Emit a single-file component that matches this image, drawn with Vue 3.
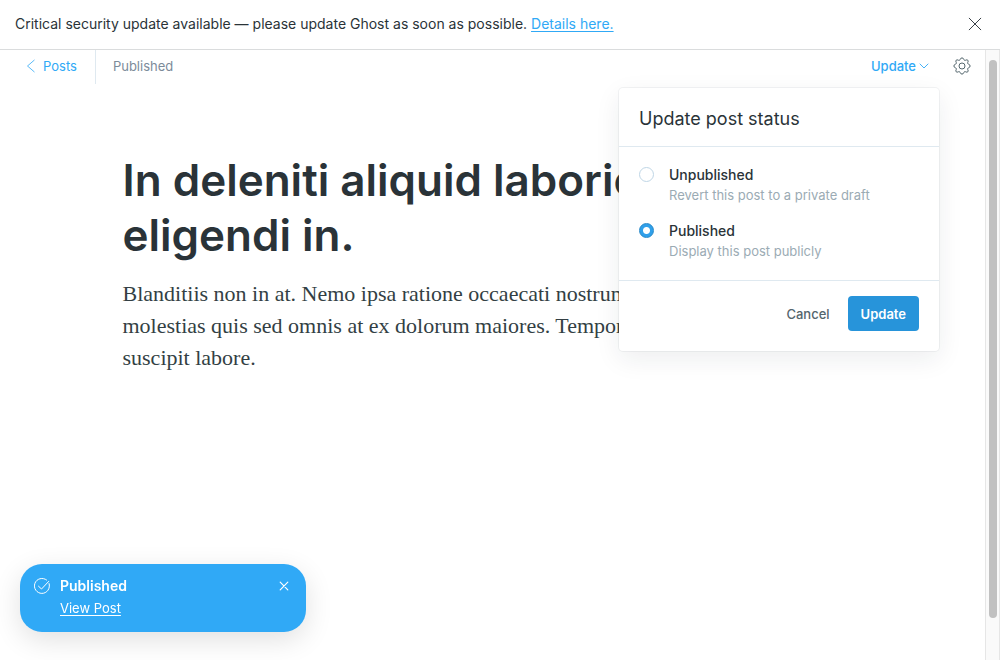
<script setup>
import { ref } from 'vue'

const status = ref('published')
const options = [
  { value: 'draft', label: 'Unpublished', hint: 'Revert this post to a private draft' },
  { value: 'published', label: 'Published', hint: 'Display this post publicly' },
]
</script>

<template>
  <div class="app">
    <aside class="alert">
      <p>Critical security update available — please update Ghost as soon as possible. <a href="#">Details here.</a></p>
      <button class="icon-button" type="button" aria-label="Close alert">
        <svg width="14" height="14" viewBox="0 0 14 14" fill="none" stroke="#394047" stroke-width="1" stroke-linecap="round"><path d="M1.2 1.2l11.6 11.6M12.8 1.2L1.2 12.8" /></svg>
      </button>
    </aside>

    <div class="workspace">
      <main class="editor">
        <header class="toolbar">
          <a class="back" href="#">
            <svg width="10" height="14" viewBox="0 0 10 14" fill="none" stroke="#30a9f6" stroke-width="0.8" stroke-linecap="round" stroke-linejoin="round"><path d="M8.2 1.2L1.5 7l6.7 5.8" /></svg>
            <span>Posts</span>
          </a>
          <span class="state">Published</span>
          <div class="menu">
            <button class="update-trigger" type="button" aria-expanded="true">
              <span>Update</span>
              <svg width="10" height="6" viewBox="0 0 10 6" fill="none" stroke="#30a9f6" stroke-width="0.9" stroke-linecap="round" stroke-linejoin="round"><path d="M1 1l4 4 4-4" /></svg>
            </button>
            <section class="popover" aria-label="Update post status">
              <h2>Update post status</h2>
              <div class="options">
                <label v-for="o in options" :key="o.value" class="option">
                  <input v-model="status" type="radio" name="status" :value="o.value" />
                  <span class="copy"><strong>{{ o.label }}</strong><small>{{ o.hint }}</small></span>
                </label>
              </div>
              <footer>
                <button class="cancel" type="button">Cancel</button>
                <button class="primary" type="button">Update</button>
              </footer>
            </section>
          </div>
          <button class="icon-button" type="button" aria-label="Settings">
            <svg width="18" height="18" viewBox="0 0 18 18" fill="none" stroke="#54666d" stroke-width="1" stroke-linejoin="round">
              <circle cx="9" cy="9" r="3" />
              <path d="M7.3 2.2C7.6 .5 10.4 .5 10.7 2.2C10.9 3.3 12 3.7 12.9 3.1C14.3 2.1 15.9 3.7 14.9 5.1C14.3 6 14.7 7.1 15.8 7.3C17.5 7.6 17.5 10.4 15.8 10.7C14.7 10.9 14.3 12 14.9 12.9C15.9 14.3 14.3 15.9 12.9 14.9C12 14.3 10.9 14.7 10.7 15.8C10.4 17.5 7.6 17.5 7.3 15.8C7.1 14.7 6 14.3 5.1 14.9C3.7 15.9 2.1 14.3 3.1 12.9C3.7 12 3.3 10.9 2.2 10.7C.5 10.4 .5 7.6 2.2 7.3C3.3 7.1 3.7 6 3.1 5.1C2.1 3.7 3.7 2.1 5.1 3.1C6 3.7 7.1 3.3 7.3 2.2Z" />
            </svg>
          </button>
        </header>

        <article>
          <h1>In deleniti aliquid laboriosam eligendi in.</h1>
          <p>Blanditiis non in at. Nemo ipsa ratione occaecati nostrum<br />molestias quis sed omnis at ex dolorum maiores. Tempora<br />suscipit labore.</p>
        </article>
      </main>
      <div class="scroll-track" aria-hidden="true"><div class="scroll-thumb"></div></div>
    </div>

    <aside class="toast" role="status">
      <svg class="check" width="16" height="16" viewBox="0 0 16 16" fill="none" stroke="#fff" stroke-width="1" stroke-linecap="round" stroke-linejoin="round"><path d="M15.1 5.6A7.5 7.5 0 1 1 12.6 2M4.5 8.2l3 2.8 7.2-7.6" /></svg>
      <div class="toast-copy"><strong>Published</strong><a href="#">View Post</a></div>
      <button class="icon-button" type="button" aria-label="Close notification">
        <svg width="10" height="10" viewBox="0 0 10 10" fill="none" stroke="#fff" stroke-width="1.2" stroke-linecap="round"><path d="M1.2 1.2l7.6 7.6M8.8 1.2L1.2 8.8" /></svg>
      </button>
    </aside>
  </div>
</template>

<style>
body {
  margin: 0;
  background: #fff;
}
</style>

<style scoped>
* {
  box-sizing: border-box;
}

.app {
  min-height: 100vh;
  display: flex;
  flex-direction: column;
  font-family: Inter, "Liberation Sans", sans-serif;
  color: #2a3338;
}

button {
  font: inherit;
  border: 0;
  padding: 0;
  background: none;
  cursor: pointer;
}

h1, h2, p {
  margin: 0;
}

svg {
  display: block;
}

.icon-button {
  display: flex;
}

.alert {
  display: flex;
  justify-content: space-between;
  align-items: center;
  min-height: 50px;
  padding: 0 18px 2px 15px;
  border-bottom: 1px solid #dadcdd;
  font-size: 14px;
  line-height: 20px;
}

.alert a {
  color: #30a9f6;
  text-underline-offset: 2px;
}

.workspace {
  flex: 1;
  display: flex;
}

.editor {
  flex: 1;
  min-width: 0;
}

.toolbar {
  display: flex;
  align-items: center;
  height: 32px;
  padding-right: 14px;
  font-size: 13px;
  line-height: 16px;
}

.back {
  display: flex;
  align-self: flex-start;
  align-items: center;
  gap: 7px;
  height: 34px;
  padding: 0 18px 2px 26px;
  border-right: 1px solid #dfe9f0;
  color: #30a9f6;
  text-decoration: none;
}

.state {
  padding-left: 17px;
  color: #7c8b9a;
}

.menu {
  position: relative;
  margin-left: auto;
  margin-right: 24px;
}

.update-trigger {
  display: flex;
  align-items: center;
  gap: 3px;
  color: #30a9f6;
  font-weight: 500;
}

.popover {
  position: absolute;
  top: 30px;
  right: -10px;
  width: 320px;
  z-index: 2;
  background: #fff;
  border-radius: 4px;
  box-shadow: 0 0 0 1px rgba(99, 114, 130, 0.08), 0 8px 26px rgba(27, 39, 51, 0.08);
}

.popover h2 {
  padding: 18px 20px 14px;
  border-bottom: 1px solid #dfe9f0;
  font-size: 18px;
  font-weight: 400;
  line-height: 26px;
}

.options {
  display: grid;
  gap: 16px;
  padding: 18px 20px 19px;
}

.option {
  display: flex;
  align-items: flex-start;
  gap: 15px;
}

.option input {
  appearance: none;
  flex: none;
  width: 15px;
  height: 15px;
  margin: 2px 0 0;
  border: 1px solid #bfd6e6;
  border-radius: 50%;
  background: #fff;
}

.option input:checked {
  border-color: #2488c9;
  background: radial-gradient(circle, #fff 3px, #30a0ea 4px);
}

.copy {
  display: grid;
}

.copy strong {
  font-size: 14px;
  font-weight: 500;
  line-height: 20px;
}

.copy small {
  color: #9babb4;
  font-size: 13px;
  line-height: 20px;
}

.popover footer {
  display: flex;
  justify-content: flex-end;
  align-items: center;
  gap: 18px;
  padding: 15px 20px 20px;
  border-top: 1px solid #dfe9f0;
}

.cancel {
  color: #54666d;
  font-weight: 500;
}

.primary {
  height: 35px;
  padding: 0 13px;
  border-radius: 4px;
  background: #2794da;
  color: #fff;
  font-weight: 600;
}

article {
  max-width: 740px;
  width: 76%;
  margin: 71px auto 0;
}

h1 {
  font-size: 44px;
  font-weight: 600;
  line-height: 55px;
}

article p {
  margin-top: 15px;
  color: #333f44;
  font-family: Georgia, "Liberation Serif", serif;
  font-size: 22px;
  line-height: 32px;
}

.scroll-track {
  display: flex;
  width: 15px;
  padding: 10px 2px 42px 3px;
  border: solid #e6e6e6;
  border-width: 0 1px;
  background: #fafafa;
}

.scroll-thumb {
  flex: 1;
  border-radius: 4px;
  background: #c1c1c1;
}

.toast {
  position: fixed;
  left: 20px;
  bottom: 28px;
  display: flex;
  align-items: flex-start;
  width: 286px;
  padding: 12px 17px 12px 14px;
  border-radius: 22px;
  background: #30a9f6;
  box-shadow: 0 8px 28px rgba(0, 0, 0, 0.12);
  color: #fff;
}

.check {
  margin: 2px 10px 0 0;
}

.toast-copy {
  display: grid;
  flex: 1;
  justify-items: start;
}

.toast-copy strong {
  font-size: 14px;
  font-weight: 600;
  line-height: 20px;
}

.toast-copy a {
  color: inherit;
  font-size: 13px;
  line-height: 24px;
  text-underline-offset: 2px;
}

.toast .icon-button {
  margin-top: 5px;
}
</style>
